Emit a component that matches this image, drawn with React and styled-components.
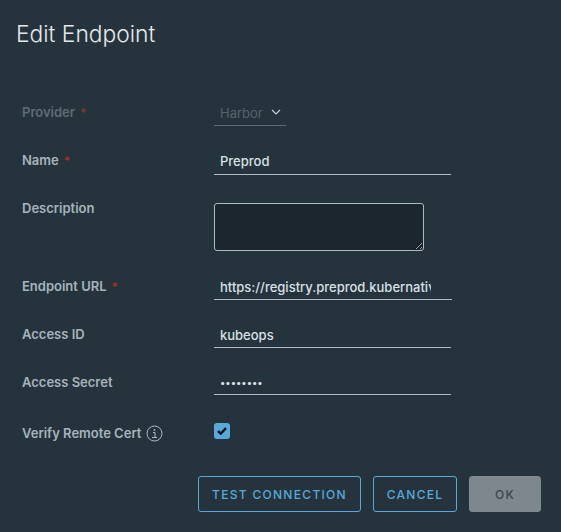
import React from "react";
import styled, { createGlobalStyle } from "styled-components";

const Global = createGlobalStyle`
  html, body {
    margin: 0;
    padding: 0;
    background: #25333d;
  }
  body {
    font-family: "Inter", "Liberation Sans", sans-serif;
  }
`;

const Modal = styled.div`
  width: 561px;
  height: 532px;
  box-sizing: border-box;
  padding: 19px 20px 0 22px;
  background: #25333d;
  overflow: hidden;
`;

const Title = styled.h3`
  margin: 0 0 0 -6px;
  height: 30px;
  font-size: 22.8px;
  line-height: 30px;
  font-weight: 300;
  color: #e4e8eb;
`;

const Form = styled.form`
  margin-top: 51px;
  display: flex;
  flex-direction: column;
`;

const Row = styled.div`
  display: grid;
  grid-template-columns: 192px 1fr;
  height: ${(p) => p.$height || 48}px;
`;

const Label = styled.label`
  display: flex;
  align-items: center;
  align-self: start;
  height: 24px;
  margin-top: ${(p) => p.$offset || 0}px;
  font-size: 13px;
  font-weight: 600;
  color: ${(p) => (p.$disabled ? "#5f6b73" : "#a6b3bc")};
`;

const Star = styled.span`
  margin-left: 5px;
  color: ${(p) => (p.$disabled ? "#7a3a30" : "#a5301f")};
  font-size: 12px;
`;

const Input = styled.input`
  display: block;
  box-sizing: border-box;
  width: ${(p) => p.$width || 237}px;
  height: ${(p) => p.$height || 26}px;
  margin: 0;
  padding: 0 ${(p) => p.$clip || 6}px 0 6px;
  border: 0;
  border-bottom: 1px solid #adbbc4;
  background: transparent;
  outline: none;
  font-family: inherit;
  font-size: ${(p) => p.$size || 13}px;
  font-weight: 500;
  color: #d8e0e5;
`;

const SelectWrap = styled.div`
  box-sizing: border-box;
  display: flex;
  align-items: center;
  width: 72px;
  height: 26px;
  padding-left: 6px;
  border-bottom: 1px solid #5f6b73;
  font-size: 13px;
  color: #56626a;
`;

const Chevron = styled.svg`
  width: 10px;
  height: 6px;
  margin-left: 8px;
  margin-top: -2px;
`;

const TextArea = styled.textarea`
  display: block;
  box-sizing: border-box;
  width: 210px;
  height: 48px;
  margin: 7px 0 0;
  padding: 4px 6px;
  border: 1px solid #adbbc4;
  border-radius: 3px;
  background: #1b262e;
  outline: none;
  color: #e9ecef;
  font-family: inherit;
`;

const Hint = styled.svg`
  width: 17px;
  height: 17px;
  margin-left: 5px;
`;

const Check = styled.span`
  display: flex;
  align-items: center;
  justify-content: center;
  width: 16px;
  height: 16px;
  margin-top: 5px;
  border-radius: 3px;
  background: #57a9d9;
`;

const Footer = styled.div`
  display: flex;
  justify-content: flex-end;
  gap: 12px;
  margin-top: 10px;
`;

const Button = styled.button`
  box-sizing: border-box;
  height: 36px;
  width: ${(p) => p.$width}px;
  padding: 0;
  border: 1px solid ${(p) => (p.$disabled ? "#7e878e" : "#57a9d9")};
  border-radius: 3px;
  background: ${(p) => (p.$disabled ? "#7e878e" : "transparent")};
  color: ${(p) => (p.$disabled ? "#3a464f" : "#57a9d9")};
  font-family: inherit;
  font-size: 12px;
  font-weight: 500;
  letter-spacing: 1.3px;
`;

export default function App() {
  return (
    <>
      <Global />
      <Modal>
        <Title>Edit Endpoint</Title>
        <Form>
          <Row>
            <Label $disabled>
              Provider<Star $disabled>*</Star>
            </Label>
            <SelectWrap>
              Harbor
              <Chevron viewBox="0 0 10 6" fill="none" stroke="#c3ccd2" strokeWidth="1.2">
                <path d="M1 1l4 4 4-4" />
              </Chevron>
            </SelectWrap>
          </Row>
          <Row>
            <Label>
              Name<Star>*</Star>
            </Label>
            <Input $height={27} defaultValue="Preprod" />
          </Row>
          <Row $height={78}>
            <Label>Description</Label>
            <TextArea />
          </Row>
          <Row>
            <Label>
              Endpoint URL<Star>*</Star>
            </Label>
            <Input $width={238} $clip={21} defaultValue="https://registry.preprod.kubernative.net" />
          </Row>
          <Row>
            <Label>Access ID</Label>
            <Input defaultValue="kubeops" />
          </Row>
          <Row>
            <Label>Access Secret</Label>
            <Input type="password" $height={25} $size={10} defaultValue="kubeops1" />
          </Row>
          <Row>
            <Label $offset={3}>
              Verify Remote Cert
              <Hint viewBox="0 0 17 17" fill="none" stroke="#adbbc4" strokeWidth="1">
                <circle cx="8.5" cy="8.5" r="7.5" />
                <path d="M7 7.5h2v5M6 12.5h5" />
                <path d="M8.5 4.2v1.6" strokeWidth="1.6" />
              </Hint>
            </Label>
            <Check>
              <svg width="10" height="8" viewBox="0 0 10 8" fill="none" stroke="#0b1418" strokeWidth="2.4">
                <path d="M1 4l2.8 2.6L9 1.2" />
              </svg>
            </Check>
          </Row>
          <Footer>
            <Button type="button" $width={163}>TEST CONNECTION</Button>
            <Button type="button" $width={84}>CANCEL</Button>
            <Button type="button" $width={72} $disabled>OK</Button>
          </Footer>
        </Form>
      </Modal>
    </>
  );
}
